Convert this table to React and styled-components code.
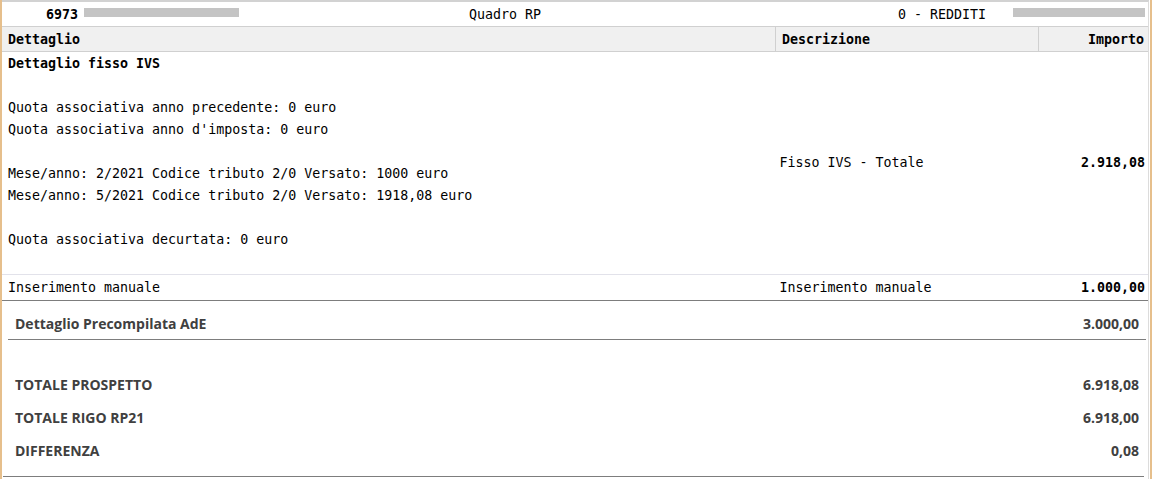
import React from "react";
import styled, { createGlobalStyle } from "styled-components";

const GlobalStyle = createGlobalStyle`
  html, body {
    margin: 0;
    padding: 0;
    background: #ffffff;
  }
`;

const mono = `"DejaVu Sans Mono", "Liberation Mono", monospace`;
const sans = `"Open Sans", "Noto Sans", Arial, sans-serif`;

// Cornice esterna con i bordi color sabbia
const Frame = styled.div`
  border-left: 2px solid #e6bf8c;
  border-right: 2px solid #e6bf8c;
  min-height: 479px;
  box-sizing: border-box;
  width: 1152px;
`;

const Panel = styled.div`
  border-top: 2px solid #d2d2d2;
  border-right: 1px solid #dcdcdc;
  margin-right: 1px;
  min-height: 477px;
`;

// Riga superiore con codice, titolo e quadro
const InfoRow = styled.div`
  display: grid;
  grid-template-columns: 82px 155px 230px 429px 115px 132px;
  align-items: center;
  height: 24px;
  border-bottom: 1px solid #d0d0d0;
  font-family: ${mono};
  font-size: 13.3px;
  color: #000;
`;

const Code = styled.div`
  text-align: right;
  padding-right: 6px;
  font-weight: bold;
`;

const Masked = styled.div`
  height: 9px;
  background: #c4c4c4;
  margin-top: -3px;
`;

const InfoText = styled.div`
  white-space: nowrap;
`;

const Table = styled.table`
  width: 100%;
  border-collapse: collapse;
  font-family: ${mono};
  font-size: 13.3px;
  color: #000;
`;

const Th = styled.th`
  background: #f0f0f0;
  height: 24px;
  padding: 0 ${(p) => (p.$right ? "4px" : "0")} 0 ${(p) => (p.$right ? "0" : "6px")};
  text-align: ${(p) => (p.$right ? "right" : "left")};
  font-weight: bold;
  border-bottom: 1px solid #d0d0d0;
  border-left: ${(p) => (p.$first ? "none" : "1px solid #d0d0d0")};
  width: ${(p) => p.$width || "auto"};
`;

const Td = styled.td`
  vertical-align: middle;
  padding: 0 ${(p) => (p.$right ? "3px" : "0")} 0 ${(p) => p.$pad || "6px"};
  text-align: ${(p) => (p.$right ? "right" : "left")};
  font-weight: ${(p) => (p.$bold ? "bold" : "normal")};
  line-height: 22px;
  white-space: nowrap;
`;

const Row = styled.tr`
  border-bottom: 1px solid ${(p) => p.$line || "#e2e2ea"};
`;

const DetailLines = styled.div`
  line-height: 22px;
  padding: 1px 0 1px;
`;

const Line = styled.div`
  height: 22px;
  font-weight: ${(p) => (p.$bold ? "bold" : "normal")};
`;

// Sezione riepilogo in basso
const Summary = styled.div`
  margin: 0 2px 0 6px;
  font-family: ${sans};
  font-size: 14px;
  font-weight: 700;
  color: #404040;
`;

const PrecRow = styled.div`
  display: flex;
  justify-content: space-between;
  line-height: 22px;
  padding: 12px 7px 4px;
  border-bottom: 1px solid #7d7d7d;
`;

const Totals = styled.div`
  margin: 28px 2px 0 -5px;
  padding: 0 0 9px 5px;
  border-bottom: 1px solid #7d7d7d;
`;

const TotalRow = styled.div`
  display: flex;
  justify-content: space-between;
  align-items: center;
  height: 33px;
  padding: 0 5px 0 7px;
`;

const dettaglio = [
  { text: "Dettaglio fisso IVS", bold: true },
  { text: "" },
  { text: "Quota associativa anno precedente: 0 euro" },
  { text: "Quota associativa anno d'imposta: 0 euro" },
  { text: "" },
  { text: "Mese/anno: 2/2021 Codice tributo 2/0 Versato: 1000 euro" },
  { text: "Mese/anno: 5/2021 Codice tributo 2/0 Versato: 1918,08 euro" },
  { text: "" },
  { text: "Quota associativa decurtata: 0 euro" },
  { text: "" },
];

const totali = [
  { label: "TOTALE PROSPETTO", value: "6.918,08" },
  { label: "TOTALE RIGO RP21", value: "6.918,00" },
  { label: "DIFFERENZA", value: "0,08" },
];

function App() {
  return (
    <Frame>
      <GlobalStyle />
      <Panel>
        <InfoRow>
          <Code>6973</Code>
          <Masked />
          <div />
          <InfoText>Quadro RP</InfoText>
          <InfoText>0 - REDDITI</InfoText>
          <Masked />
        </InfoRow>
        <Table>
          <thead>
            <tr>
              <Th $first $width="767px">Dettaglio</Th>
              <Th $width="256px">Descrizione</Th>
              <Th $right>Importo</Th>
            </tr>
          </thead>
          <tbody>
            <Row>
              <Td $pad="6px">
                <DetailLines>
                  {dettaglio.map((l, i) => (
                    <Line key={i} $bold={l.bold}>
                      {l.text}
                    </Line>
                  ))}
                </DetailLines>
              </Td>
              <Td $pad="4px">Fisso IVS - Totale</Td>
              <Td $right $bold>
                2.918,08
              </Td>
            </Row>
            <Row $line="#7d7d7d">
              <Td $pad="6px" style={{ height: 25 }}>
                Inserimento manuale
              </Td>
              <Td $pad="4px">Inserimento manuale</Td>
              <Td $right $bold>
                1.000,00
              </Td>
            </Row>
          </tbody>
        </Table>
        <Summary>
          <PrecRow>
            <span>Dettaglio Precompilata AdE</span>
            <span>3.000,00</span>
          </PrecRow>
          <Totals>
            {totali.map((t) => (
              <TotalRow key={t.label}>
                <span>{t.label}</span>
                <span>{t.value}</span>
              </TotalRow>
            ))}
          </Totals>
        </Summary>
      </Panel>
    </Frame>
  );
}

export default App;
